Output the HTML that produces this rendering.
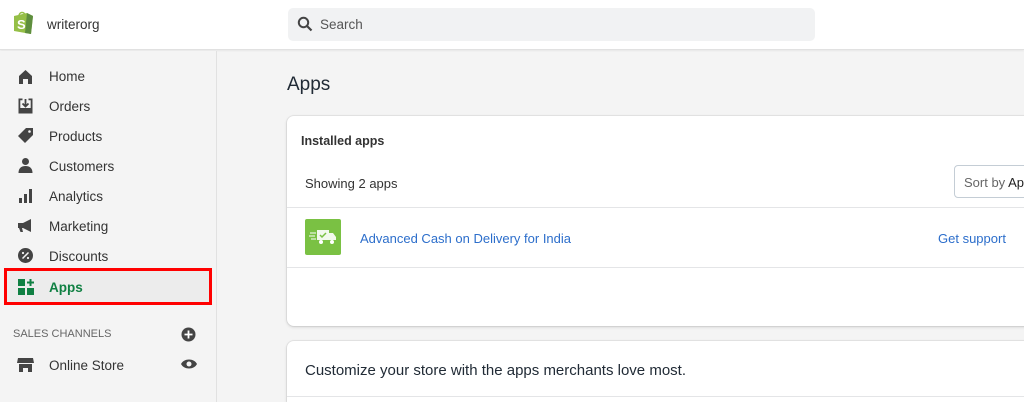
<!DOCTYPE html>
<html><head><style>
*{margin:0;padding:0;box-sizing:border-box}
html{width:1024px;height:402px;overflow:hidden}
body{width:1024px;height:402px;overflow:hidden;background:#f4f4f4;font-family:"Liberation Sans",sans-serif;color:#212b36;position:relative}
.top{position:absolute;left:0;top:0;width:1024px;height:50px;background:#fff;border-bottom:1px solid #e1e1e1;box-shadow:0 1px 2px rgba(0,0,0,.06)}
.brand{position:absolute;left:47px;top:17px;font-size:13.5px;color:#333}
.search{position:absolute;left:288px;top:8px;width:527px;height:33px;background:#f1f2f3;border-radius:5px}
.search span{position:absolute;left:32px;top:9px;font-size:13.5px;color:#555}
.side{position:absolute;left:0;top:51px;width:217px;height:351px;border-right:1px solid #e1e1e1;background:#f4f4f4}
.item{position:absolute;left:49px;font-size:13.5px;color:#333}
.ic{position:absolute;left:17px;width:17px;height:17px}
.apps{position:absolute;left:4px;top:268px;width:208px;height:37px;border:3px solid #f00;background:#ececec}
h1{position:absolute;left:287px;top:74px;font-size:19px;font-weight:normal;color:#212b36}
.card{position:absolute;left:287px;width:760px;background:#fff;border-radius:7px;box-shadow:0 0 0 1px rgba(0,0,0,.05),0 1px 3px rgba(0,0,0,.15)}
.t{position:absolute;font-size:13px}
</style></head><body>
<div class="top">
<svg style="position:absolute;left:11px;top:9px" width="24" height="26" viewBox="0 0 24 26"><path d="M3 7l13-3 6 3-2 18-17-3z" fill="#95bf47"/><path d="M16 4l6 3-2 18-6-1z" fill="#5e8e3e"/><path d="M8 7c0-4 5-5 6-1" stroke="#95bf47" stroke-width="1.5" fill="none"/><text x="6" y="20" font-size="13" font-weight="bold" fill="#fff" font-family="Liberation Sans">S</text></svg>
<div class="brand">writerorg</div>
<div class="search"><svg style="position:absolute;left:9px;top:8px" width="16" height="16" viewBox="0 0 16 16"><circle cx="6.5" cy="6.5" r="4.7" stroke="#444" stroke-width="2" fill="none"/><path d="M10 10l4.5 4.5" stroke="#444" stroke-width="2.2"/></svg><span>Search</span></div>
</div>
<div class="side"></div>
<svg class="ic" style="top:68px" viewBox="0 0 17 17"><path d="M2 8l6.5-6 6.5 6v8h-4v-5h-5v5H2z" fill="#444"/></svg>
<div class="item" style="top:69px">Home</div>
<svg class="ic" style="top:97px" viewBox="0 0 17 17"><path d="M1.5 1.5h4v1.8H3.3v11.4h10.4V3.3h-2.2V1.5h4v15h-14z" fill="#444"/><path d="M8.5 2v7M5.5 6.5l3 3 3-3" stroke="#444" stroke-width="1.8" fill="none"/><rect x="3" y="11" width="11" height="4" fill="#444"/></svg>
<div class="item" style="top:99px">Orders</div>
<svg class="ic" style="top:127px" viewBox="0 0 17 17"><path d="M9 1h7v7l-8 8-7-7z" fill="#444"/><circle cx="12.5" cy="4.5" r="1.3" fill="#f4f4f4"/></svg>
<div class="item" style="top:129px">Products</div>
<svg class="ic" style="top:157px" viewBox="0 0 17 17"><circle cx="8.5" cy="4.5" r="3.5" fill="#444"/><path d="M1.5 16c0-5 3-7 7-7s7 2 7 7z" fill="#444"/></svg>
<div class="item" style="top:159px">Customers</div>
<svg class="ic" style="top:187px" viewBox="0 0 17 17"><rect x="2" y="11" width="3" height="5" fill="#444"/><rect x="7" y="7" width="3" height="9" fill="#444"/><rect x="12" y="2" width="3" height="14" fill="#444"/></svg>
<div class="item" style="top:189px">Analytics</div>
<svg class="ic" style="top:217px" viewBox="0 0 17 17"><path d="M1 6h5l8-4v13l-8-4H5l1 4H3.5L2 11H1z" fill="#444"/></svg>
<div class="item" style="top:219px">Marketing</div>
<svg class="ic" style="top:247px" viewBox="0 0 17 17"><circle cx="8.5" cy="8.5" r="7.5" fill="#444"/><path d="M5.5 11.5l6-6" stroke="#f4f4f4" stroke-width="1.5"/><circle cx="6" cy="6" r="1.1" fill="#f4f4f4"/><circle cx="11" cy="11" r="1.1" fill="#f4f4f4"/></svg>
<div class="item" style="top:249px">Discounts</div>
<div class="apps"></div>
<svg class="ic" style="top:278px" viewBox="0 0 17 17"><rect x="1" y="1" width="7" height="7" fill="#108043"/><rect x="1" y="10" width="7" height="7" fill="#108043"/><rect x="10" y="10" width="7" height="7" fill="#108043"/><path d="M13.5 1v7M10 4.5h7" stroke="#108043" stroke-width="2"/></svg>
<div class="item" style="top:280px;color:#108043;font-weight:bold">Apps</div>
<div class="t" style="left:13px;top:328px;font-size:11px;color:#666">SALES CHANNELS</div>
<svg style="position:absolute;left:181px;top:327px" width="15" height="15" viewBox="0 0 15 15"><circle cx="7.5" cy="7.5" r="7" fill="#444"/><path d="M7.5 3.5v8M3.5 7.5h8" stroke="#fff" stroke-width="1.8"/></svg>
<svg class="ic" style="top:356px" viewBox="0 0 17 17"><path d="M1 2h15l1 5H0z" fill="#444"/><path d="M2 8h13v8h-4v-4H6v4H2z" fill="#444"/></svg>
<div class="item" style="top:358px">Online Store</div>
<svg style="position:absolute;left:181px;top:358px" width="16" height="12" viewBox="0 0 16 12"><path d="M0 6c3-6 13-6 16 0-3 6-13 6-16 0z" fill="#444"/><circle cx="8" cy="6" r="2.5" fill="#f4f4f4"/></svg>
<h1>Apps</h1>
<div class="card" style="top:116px;height:210px">
<div class="t" style="left:14px;top:18px;font-weight:bold;color:#333;font-size:12.5px">Installed apps</div>
<div class="t" style="left:18px;top:60px;color:#333;font-size:13px">Showing 2 apps</div>
<div style="position:absolute;left:667px;top:49px;width:100px;height:33px;border:1px solid #c4cdd5;border-radius:4px;background:#fff"><span class="t" style="left:9px;top:9px;font-size:13px;color:#666">Sort by <span style="color:#222">Ap</span></span></div>
<div style="position:absolute;left:0;right:0;top:91px;border-top:1px solid #e4e5e7"></div>
<div style="position:absolute;left:18px;top:103px;width:36px;height:36px;background:#7ac143;border-radius:2px"></div>
<svg style="position:absolute;left:22px;top:112px" width="28" height="18" viewBox="0 0 28 18"><path d="M8 2h12v10H8zM20 5h4l3 4v3h-7z" fill="#fff" opacity=".9"/><circle cx="12" cy="14" r="2" fill="#fff"/><circle cx="23" cy="14" r="2" fill="#fff"/><path d="M1 5h6M0 8h6M2 11h5" stroke="#fff"/><path d="M11 7l2 2 4-4" stroke="#7ac143" stroke-width="1.5" fill="none"/></svg>
<div class="t" style="left:73px;top:115px;color:#2c6ecb;font-size:13px">Advanced Cash on Delivery for India</div>
<div class="t" style="left:651px;top:115px;color:#2c6ecb;font-size:13px">Get support</div>
<div style="position:absolute;left:0;right:0;top:151px;border-top:1px solid #e4e5e7"></div>
</div>
<div class="card" style="top:341px;height:61px;border-bottom-left-radius:0;border-bottom-right-radius:0">
<div class="t" style="left:18px;top:21px;font-size:15px;color:#212b36">Customize your store with the apps merchants love most.</div>
<div style="position:absolute;left:0;right:0;top:55px;border-top:1px solid #e4e5e7"></div>
</div>
</body></html>
